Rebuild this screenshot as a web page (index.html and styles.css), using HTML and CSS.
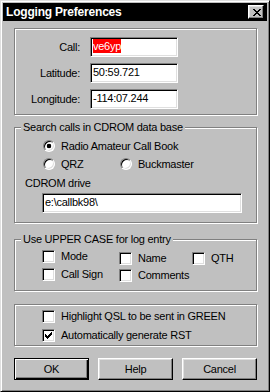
FILE: index.html
```html
<!DOCTYPE html>
<html lang="en">
<head>
  <meta charset="UTF-8">
  <title>Logging Preferences</title>
  <link rel="stylesheet" href="styles.css">
</head>
<body>
  <div class="window">
    <!-- Title bar -->
    <div class="titlebar">
      <span class="title">Logging Preferences</span>
      <span class="close-btn">
        <svg width="8" height="7" viewBox="0 0 8 7" shape-rendering="crispEdges"><path fill="#000" d="M0 0h2v1h-2z M6 0h2v1h-2z M1 1h2v1h-2z M5 1h2v1h-2z M2 2h4v1h-4z M3 3h2v1h-2z M2 4h4v1h-4z M1 5h2v1h-2z M5 5h2v1h-2z M0 6h2v1h-2z M6 6h2v1h-2z"/></svg>
      </span>
    </div>

    <div class="dialog">
      <!-- Station position -->
      <div class="group group-coords">
        <div class="field-row">
          <span class="field-label">Call:</span>
          <span class="field"><span class="selected">ve6yp</span></span>
        </div>
        <div class="field-row">
          <span class="field-label">Latitude:</span>
          <span class="field">50:59.721</span>
        </div>
        <div class="field-row">
          <span class="field-label">Longitude:</span>
          <span class="field">-114:07.244</span>
        </div>
      </div>

      <!-- CDROM lookup -->
      <div class="group group-cdrom">
        <div class="legend">Search calls in CDROM data base</div>
        <div class="radio-row first-row">
          <span class="radio-item"><span class="radio checked"></span>Radio Amateur Call Book</span>
        </div>
        <div class="radio-row">
          <span class="radio-item first-col"><span class="radio"></span>QRZ</span>
          <span class="radio-item"><span class="radio"></span>Buckmaster</span>
        </div>
        <div class="drive-label">CDROM drive</div>
        <span class="field drive-field">e:\callbk98\</span>
      </div>

      <!-- Upper case options -->
      <div class="group group-upper">
        <div class="legend">Use UPPER CASE for log entry</div>
        <div class="cb-grid">
          <div class="cb-col col-1">
            <span class="cb-item"><span class="checkbox"></span>Mode</span>
            <span class="cb-item"><span class="checkbox"></span>Call Sign</span>
          </div>
          <div class="cb-col col-2">
            <span class="cb-item"><span class="checkbox"></span>Name</span>
            <span class="cb-item"><span class="checkbox"></span>Comments</span>
          </div>
          <div class="cb-col col-3">
            <span class="cb-item"><span class="checkbox"></span>QTH</span>
          </div>
        </div>
      </div>

      <!-- Misc options -->
      <div class="group group-options">
        <span class="cb-item"><span class="checkbox"></span>Highlight QSL to be sent in GREEN</span>
        <span class="cb-item"><span class="checkbox"><svg width="7" height="7" viewBox="0 0 7 7" shape-rendering="crispEdges"><path fill="#000" d="M6 0h1v1h-1z M5 1h2v1h-2z M0 2h1v1h-1z M4 2h3v1h-3z M0 3h2v1h-2z M3 3h3v1h-3z M0 4h5v1h-5z M1 5h3v1h-3z M2 6h1v1h-1z"/></svg></span>Automatically generate RST</span>
      </div>

      <!-- Dialog buttons -->
      <div class="buttons">
        <span class="btn default">OK</span>
        <span class="btn">Help</span>
        <span class="btn">Cancel</span>
      </div>
    </div>
  </div>
</body>
</html>
```

FILE: styles.css
```css
/* Win95 style dialog */
body {
  margin: 0;
  background: #c0c0c0;
  color: #000;
  font-family: "Liberation Sans", Arial, sans-serif;
  font-size: 11px;
  letter-spacing: -0.25px;
}
.window {
  width: 270px;
  height: 392px;
  box-sizing: border-box;
  padding: 2px;
  background: #c0c0c0;
  border: 1px solid;
  border-color: #dfdfdf #000 #000 #dfdfdf;
  box-shadow: inset 1px 1px #fff, inset -1px -1px #808080;
}
.titlebar {
  height: 18px;
  background: #000;
  color: #fff;
  display: flex;
  align-items: center;
  justify-content: space-between;
  padding: 0 3px;
}
.title {
  font-weight: bold;
  font-size: 12px;
  letter-spacing: -0.2px;
}
.close-btn {
  width: 16px;
  height: 14px;
  box-sizing: border-box;
  padding-left: 1px;
  background: #c0c0c0;
  border: 1px solid;
  border-color: #fff #000 #000 #fff;
  box-shadow: inset -1px -1px #808080, inset 1px 1px #dfdfdf;
  display: flex;
  align-items: center;
  justify-content: center;
}
.dialog {
  padding: 7px 10px 0 11px;
}
/* Etched group boxes */
.group {
  border: 1px solid #808080;
  box-shadow: 1px 1px 0 #fff, inset 1px 1px 0 #fff;
}
.legend {
  width: fit-content;
  height: 13px;
  line-height: 13px;
  margin: -7px 0 0 6px;
  padding: 0 2px;
  background: #c0c0c0;
}
.group-coords {
  padding: 8px 0 5px 0;
}
.group-cdrom {
  margin-top: 12px;
  padding-bottom: 9px;
}
.group-upper {
  margin-top: 16px;
  padding-bottom: 8px;
}
.group-options {
  margin-top: 13px;
  padding: 5px 0 3px 27px;
  display: flex;
  flex-direction: column;
  gap: 6px;
}
/* Text fields */
.field-row {
  display: flex;
  align-items: center;
  height: 20px;
}
.field-row + .field-row {
  margin-top: 6px;
}
.field-label {
  width: 65px;
  margin-right: 10px;
  text-align: right;
}
.field {
  display: block;
  width: 88px;
  height: 20px;
  box-sizing: border-box;
  padding: 1px 2px;
  line-height: 14px;
  background: #fff;
  border: 1px solid;
  border-color: #808080 #fff #fff #808080;
  box-shadow: inset 1px 1px #000, inset -1px -1px #dfdfdf;
  white-space: nowrap;
}
.selected {
  display: inline-block;
  background: #f00;
  color: #fff;
}
/* Radio buttons */
.radio-row {
  display: flex;
  align-items: center;
  height: 16px;
  margin-top: 2px;
  padding-left: 28px;
}
.radio-row.first-row {
  margin-top: 4px;
}
.radio-item {
  display: flex;
  align-items: center;
}
.radio-item.first-col {
  width: 77px;
}
.radio {
  flex: none;
  width: 12px;
  height: 12px;
  box-sizing: border-box;
  margin-right: 6px;
  border-radius: 50%;
  background: #fff;
  border: 1px solid;
  border-color: #808080 #fff #fff #808080;
  box-shadow: inset 1px 1px #000, inset -1px -1px #dfdfdf;
}
.radio.checked {
  background: radial-gradient(circle, #000 2px, #fff 2.6px);
}
.drive-label {
  height: 13px;
  line-height: 13px;
  margin: 5px 0 0 10px;
}
.drive-field {
  width: 200px;
  margin: 3px 0 0 27px;
}
/* Check boxes */
.cb-grid {
  display: flex;
  align-items: flex-start;
  padding: 4px 0 0 27px;
}
.cb-col {
  display: flex;
  flex-direction: column;
  gap: 5px;
}
.col-1 {
  width: 77px;
}
.col-2 {
  width: 73px;
  margin-top: 2px;
  gap: 4px;
}
.col-3 {
  margin-top: 2px;
}
.cb-item {
  display: flex;
  align-items: center;
  height: 13px;
  line-height: 13px;
  white-space: nowrap;
}
.checkbox {
  flex: none;
  width: 13px;
  height: 13px;
  box-sizing: border-box;
  margin-right: 6px;
  background: #fff;
  border: 1px solid;
  border-color: #808080 #fff #fff #808080;
  box-shadow: inset 1px 1px #000, inset -1px -1px #dfdfdf;
  display: flex;
  align-items: center;
  justify-content: center;
}
/* Push buttons */
.buttons {
  display: flex;
  justify-content: space-between;
  margin-top: 12px;
}
.btn {
  width: 75px;
  height: 22px;
  box-sizing: border-box;
  display: flex;
  align-items: center;
  justify-content: center;
  background: #c0c0c0;
  border: 1px solid;
  border-color: #fff #000 #000 #fff;
  box-shadow: inset -1px -1px #808080, inset 1px 1px #dfdfdf;
}
.btn.default {
  border-color: #000;
  box-shadow: inset 1px 1px #fff, inset -1px -1px #000, inset -2px -2px #808080;
}
```
